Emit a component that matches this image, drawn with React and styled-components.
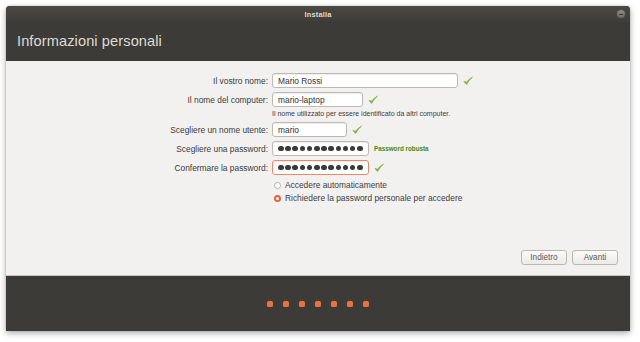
import React from 'react';
import styled, { createGlobalStyle } from 'styled-components';

const GlobalStyle = createGlobalStyle`
  html, body {
    margin: 0;
    padding: 0;
    background: #ffffff;
    font-family: "Liberation Sans", Arial, sans-serif;
  }
`;

const Page = styled.div`
  width: 640px;
  height: 342px;
  padding: 6px 10px 0 6px;
  box-sizing: border-box;
`;

const Window = styled.div`
  width: 624px;
  height: 325px;
  display: flex;
  flex-direction: column;
  border-radius: 4px 4px 0 0;
  overflow: hidden;
  box-shadow: 0 2px 6px rgba(0, 0, 0, 0.35), 0 0 1px rgba(0, 0, 0, 0.4);
  background: #f2f1f0;
`;

const Header = styled.div`
  background: #3c3b37;
  height: 55px;
  display: flex;
  flex-direction: column;
`;

const TitleBar = styled.div`
  position: relative;
  height: 16px;
  display: flex;
  align-items: center;
  justify-content: center;
  background: linear-gradient(#4a4944, #3e3d39);
  color: #dfdbd2;
  font-size: 7.4px;
  font-weight: bold;
  letter-spacing: 0.2px;
`;

const CloseButton = styled.span`
  position: absolute;
  right: 5px;
  top: 4px;
  width: 8px;
  height: 8px;
  border-radius: 50%;
  background: linear-gradient(#8c8b86, #6a6964);
  display: flex;
  align-items: center;
  justify-content: center;

  &::after {
    content: '';
    width: 4px;
    height: 1px;
    background: #3c3b37;
  }
`;

const PageTitle = styled.div`
  flex: 1;
  display: flex;
  align-items: center;
  padding-left: 11px;
  padding-bottom: 1px;
  color: #dfdbd2;
  font-size: 14.6px;
  font-weight: normal;
  letter-spacing: 0.1px;
`;

const Content = styled.div`
  flex: 1;
  display: flex;
  flex-direction: column;
  border-bottom: 1px solid #c9c6c0;
`;

const Form = styled.div`
  display: grid;
  grid-template-columns: 262px 1fr;
  column-gap: 4px;
  row-gap: 4px;
  align-items: center;
  padding-top: 12px;
  font-size: 8.4px;
  color: #3c3c3c;
`;

const Label = styled.div`
  text-align: right;
`;

const Field = styled.div`
  display: flex;
  align-items: center;
  gap: 5px;
  height: 15px;
`;

const Input = styled.div`
  width: ${(p) => p.$width}px;
  height: 15px;
  box-sizing: border-box;
  display: flex;
  align-items: center;
  gap: 1.6px;
  padding: 0 4px 0 5px;
  background: #ffffff;
  border: 1px solid ${(p) => (p.$error ? '#e8896a' : '#bdb9b2')};
  border-radius: 3px;
  box-shadow: inset 0 1px 1px rgba(0, 0, 0, 0.08);
  color: #333;
`;

const Dot = styled.span`
  width: 5.6px;
  height: 5.6px;
  border-radius: 50%;
  background: #3a3a3a;
  flex: none;
`;

const Cursor = styled.span`
  width: 1px;
  height: 10px;
  background: #222;
  margin-left: 0.5px;
`;

const Strength = styled.span`
  color: #3f8a1a;
  font-weight: bold;
  font-size: 6.3px;
`;

const Hint = styled.div`
  grid-column: 2;
  font-size: 7px;
  line-height: 9px;
  margin-top: -2px;
  color: #3c3c3c;
`;

const Options = styled.div`
  grid-column: 2;
  display: flex;
  flex-direction: column;
  gap: 3px;
  margin-top: 1px;
  padding-left: 2px;
`;

const RadioRow = styled.div`
  display: flex;
  align-items: center;
  gap: 4px;
  height: 10px;
`;

const Radio = styled.span`
  width: 7px;
  height: 7px;
  box-sizing: border-box;
  border-radius: 50%;
  flex: none;
  border: ${(p) => (p.$checked ? '2px solid #e2643c' : '1px solid #b6b2ab')};
  background: #ffffff;
`;

const Spacer = styled.div`
  flex: 1;
`;

const ButtonRow = styled.div`
  display: flex;
  justify-content: flex-end;
  gap: 5px;
  padding: 0 12px 10px 0;
`;

const Button = styled.button`
  width: 46px;
  height: 15px;
  padding: 0;
  font-family: inherit;
  font-size: 8.2px;
  color: #5a5a5a;
  background: linear-gradient(#fbfbfa, #ebeae8);
  border: 1px solid #bcb8b1;
  border-radius: 3px;
`;

const Footer = styled.div`
  height: 54px;
  background: #3c3b37;
  display: flex;
  align-items: center;
  justify-content: center;
  gap: 10.6px;
  padding-top: 1px;
`;

const Step = styled.span`
  width: 5.4px;
  height: 5.4px;
  border-radius: 1.5px;
  background: #e9703f;
`;

const Check = () => (
  <svg width="10" height="10" viewBox="0 0 10 10">
    <path
      d="M1 5.6 L3.6 8.4 Q5.6 4 9.4 1.2 Q5.6 3.2 3.7 6.2 Z"
      fill="#7db23a"
      stroke="#7db23a"
      strokeWidth="0.8"
      strokeLinejoin="round"
    />
  </svg>
);

const Dots = ({ count }) => (
  <>
    {Array.from({ length: count }, (_, i) => (
      <Dot key={i} />
    ))}
  </>
);

export default function App() {
  return (
    <>
      <GlobalStyle />
      <Page>
        <Window>
          <Header>
            <TitleBar>
              Installa
              <CloseButton />
            </TitleBar>
            <PageTitle>Informazioni personali</PageTitle>
          </Header>
          <Content>
            <Form>
              <Label>Il vostro nome:</Label>
              <Field>
                <Input $width={186}>Mario Rossi</Input>
                <Check />
              </Field>

              <Label>Il nome del computer:</Label>
              <Field>
                <Input $width={91}>mario-laptop</Input>
                <Check />
              </Field>
              <Hint>Il nome utilizzato per essere identificato da altri computer.</Hint>

              <Label>Scegliere un nome utente:</Label>
              <Field>
                <Input $width={75}>mario</Input>
                <Check />
              </Field>

              <Label>Scegliere una password:</Label>
              <Field>
                <Input $width={97}>
                  <Dots count={12} />
                </Input>
                <Strength>Password robusta</Strength>
              </Field>

              <Label>Confermare la password:</Label>
              <Field>
                <Input $width={97} $error>
                  <Dots count={12} />
                  <Cursor />
                </Input>
                <Check />
              </Field>

              <Options>
                <RadioRow>
                  <Radio />
                  Accedere automaticamente
                </RadioRow>
                <RadioRow>
                  <Radio $checked />
                  Richiedere la password personale per accedere
                </RadioRow>
              </Options>
            </Form>
            <Spacer />
            <ButtonRow>
              <Button>Indietro</Button>
              <Button>Avanti</Button>
            </ButtonRow>
          </Content>
          <Footer>
            {Array.from({ length: 7 }, (_, i) => (
              <Step key={i} />
            ))}
          </Footer>
        </Window>
      </Page>
    </>
  );
}
